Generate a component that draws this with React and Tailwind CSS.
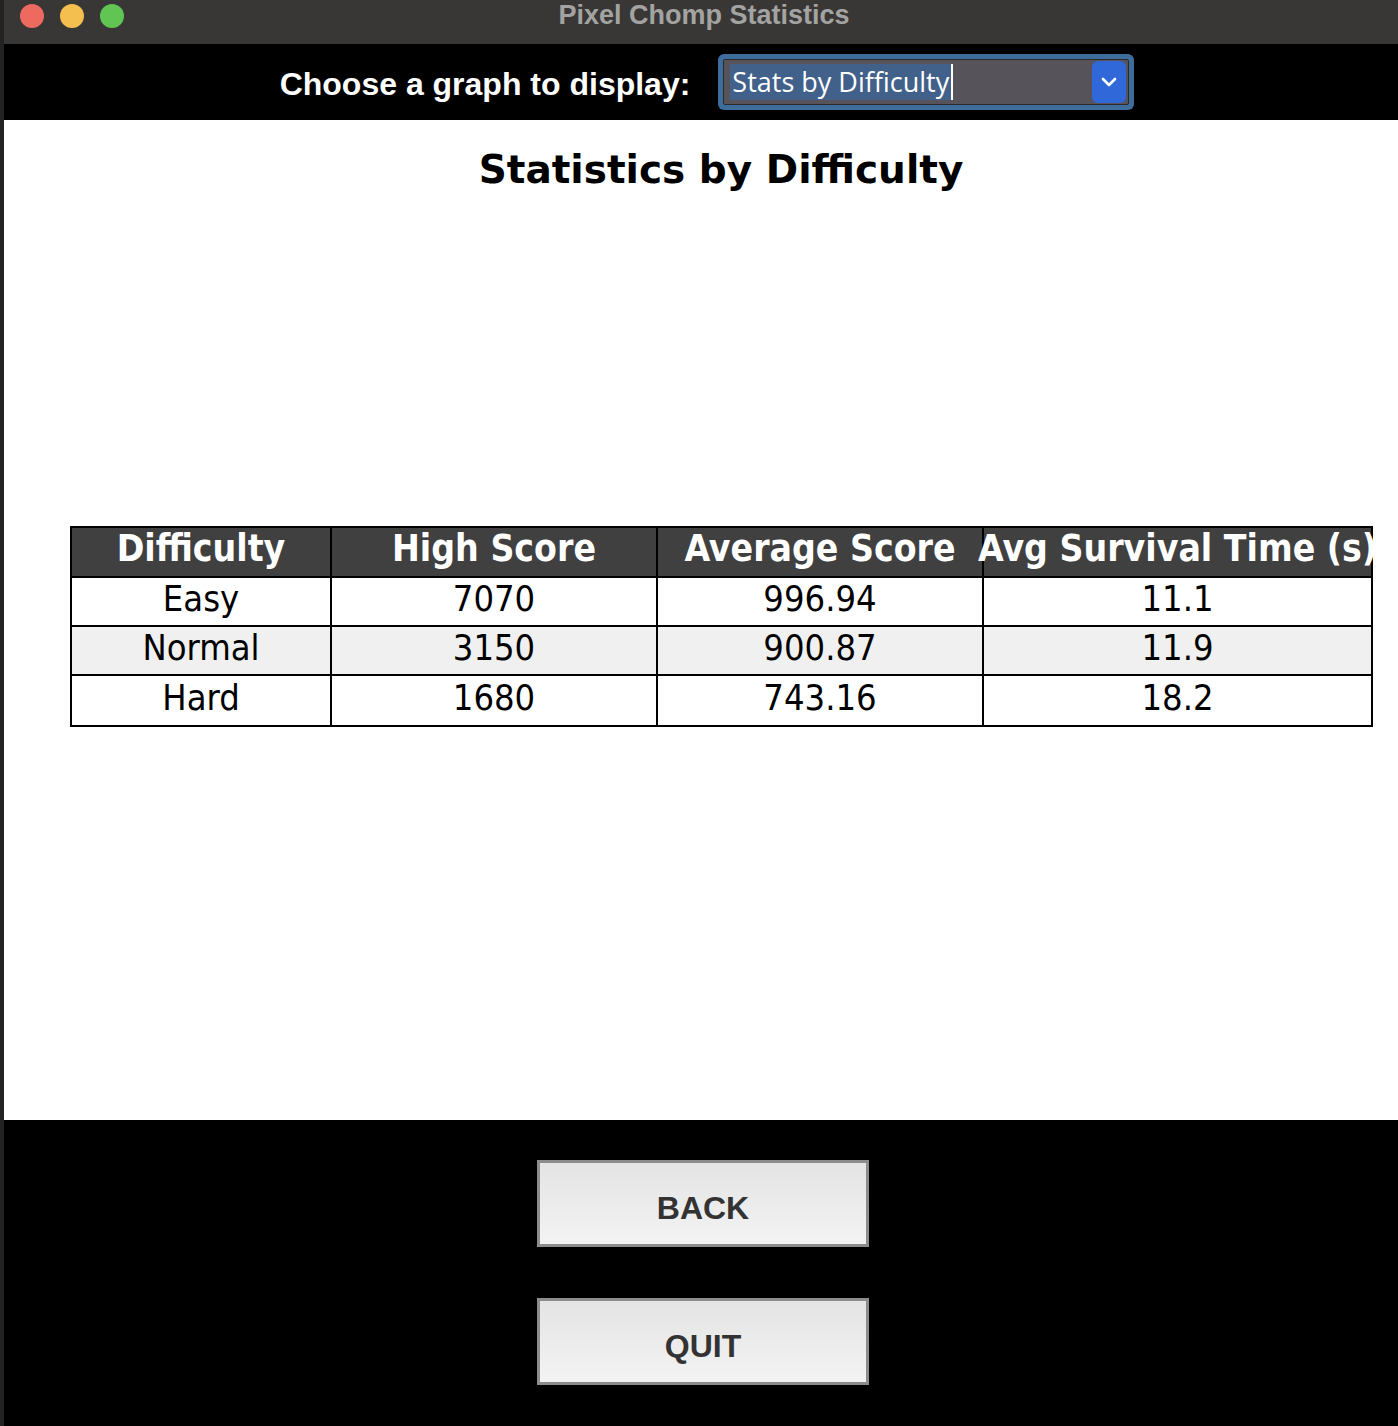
const rows = [
  { name: 'Easy', high: '7070', avg: '996.94', time: '11.1', bg: 'bg-white' },
  { name: 'Normal', high: '3150', avg: '900.87', time: '11.9', bg: 'bg-[#f0f0f0]' },
  { name: 'Hard', high: '1680', avg: '743.16', time: '18.2', bg: 'bg-white' },
]

const cols = ['w-[260px] shrink-0', 'w-[326px] shrink-0', 'w-[326px] shrink-0', 'flex-1 min-w-0']

function Cell({ children, width, last, header }) {
  return (
    <div
      className={`${width} h-full flex items-center justify-center pb-[6px] ${last ? '' : 'border-r-2 border-black'} ${header ? 'text-white font-bold text-[37px]' : 'text-black text-[36px]'} whitespace-nowrap`}
    >
      {children}
    </div>
  )
}

export default function App() {
  return (
    <div className="w-[1398px] h-[1426px] flex bg-[#1c1c1c] overflow-hidden">
      <div className="w-[4px] bg-[#222]" />
      <div className="flex-1 flex flex-col">
        {/* title bar */}
        <div className="h-[44px] bg-[#383736] flex items-center relative">
          <div className="flex gap-[16px] pl-[16px] -mt-[12px]">
            <span className="w-[24px] h-[24px] rounded-full bg-[#ee6a5f]" />
            <span className="w-[24px] h-[24px] rounded-full bg-[#f5bf4f]" />
            <span className="w-[24px] h-[24px] rounded-full bg-[#61c554]" />
          </div>
          <div className="absolute inset-x-0 top-0 h-[30px] flex items-center justify-center pl-[6px] text-[#a3a3a2] font-bold text-[27px] font-['Liberation_Sans',sans-serif] pointer-events-none">
            Pixel Chomp Statistics
          </div>
        </div>

        {/* selector bar */}
        <div className="h-[76px] bg-black flex items-center justify-center gap-[28px] pl-[12px]">
          <span className="text-white font-bold text-[32px] font-['Liberation_Sans',sans-serif] mt-[4px]">
            Choose a graph to display:
          </span>
          <div className="w-[416px] h-[56px] rounded-[6px] bg-[#3e6d9b] p-[5px]">
            <div className="h-full bg-[#56545a] border border-[#2a2a2a] rounded-[2px] flex items-center pl-[6px] pr-[2px]">
              <span className="bg-[#41618a] text-white text-[27px] font-['Open_Sans','Liberation_Sans',sans-serif] leading-[36px] px-[2px] border-r-2 border-white">
                Stats by Difficulty
              </span>
              <div className="ml-auto w-[34px] h-[42px] rounded-[6px] bg-[#3168d9] flex items-center justify-center">
                <svg width="18" height="12" viewBox="0 0 18 12" fill="none">
                  <path d="M3 3l6 6 6-6" stroke="white" strokeWidth="2.6" strokeLinecap="round" strokeLinejoin="round" />
                </svg>
              </div>
            </div>
          </div>
        </div>

        {/* chart area */}
        <div className="h-[1000px] bg-white flex flex-col items-center font-['DejaVu_Sans',sans-serif]">
          <h1 className="mt-[27px] text-[39px] font-bold text-black leading-[46px] pl-[40px]">
            Statistics by Difficulty
          </h1>
          <div className="mt-[333px] self-start ml-[66px] w-[1303px] border-2 border-black font-['DejaVu_Sans_Condensed','DejaVu_Sans',sans-serif]">
            <div className="h-[50px] bg-[#404040] flex border-b-2 border-black">
              <Cell width={cols[0]} header>Difficulty</Cell>
              <Cell width={cols[1]} header>High Score</Cell>
              <Cell width={cols[2]} header>Average Score</Cell>
              <Cell width={cols[3]} header last>Avg Survival Time (s)</Cell>
            </div>
            {rows.map((r, i) => (
              <div key={r.name} className={`h-[49px] flex ${r.bg} ${i < rows.length - 1 ? 'border-b-2 border-black' : ''}`}>
                <Cell width={cols[0]}>{r.name}</Cell>
                <Cell width={cols[1]}>{r.high}</Cell>
                <Cell width={cols[2]}>{r.avg}</Cell>
                <Cell width={cols[3]} last>{r.time}</Cell>
              </div>
            ))}
          </div>
        </div>

        {/* buttons */}
        <div className="flex-1 bg-black flex flex-col items-center pt-[40px] gap-[51px] pl-[4px]">
          {['BACK', 'QUIT'].map((label) => (
            <button
              key={label}
              className="w-[332px] h-[87px] border-[3px] border-[#8c8c8c] bg-gradient-to-b from-[#e4e4e4] to-[#f3f3f3] text-[#333] font-bold text-[32px] pt-[8px] font-['Liberation_Sans',sans-serif]"
            >
              {label}
            </button>
          ))}
        </div>
      </div>
    </div>
  )
}
